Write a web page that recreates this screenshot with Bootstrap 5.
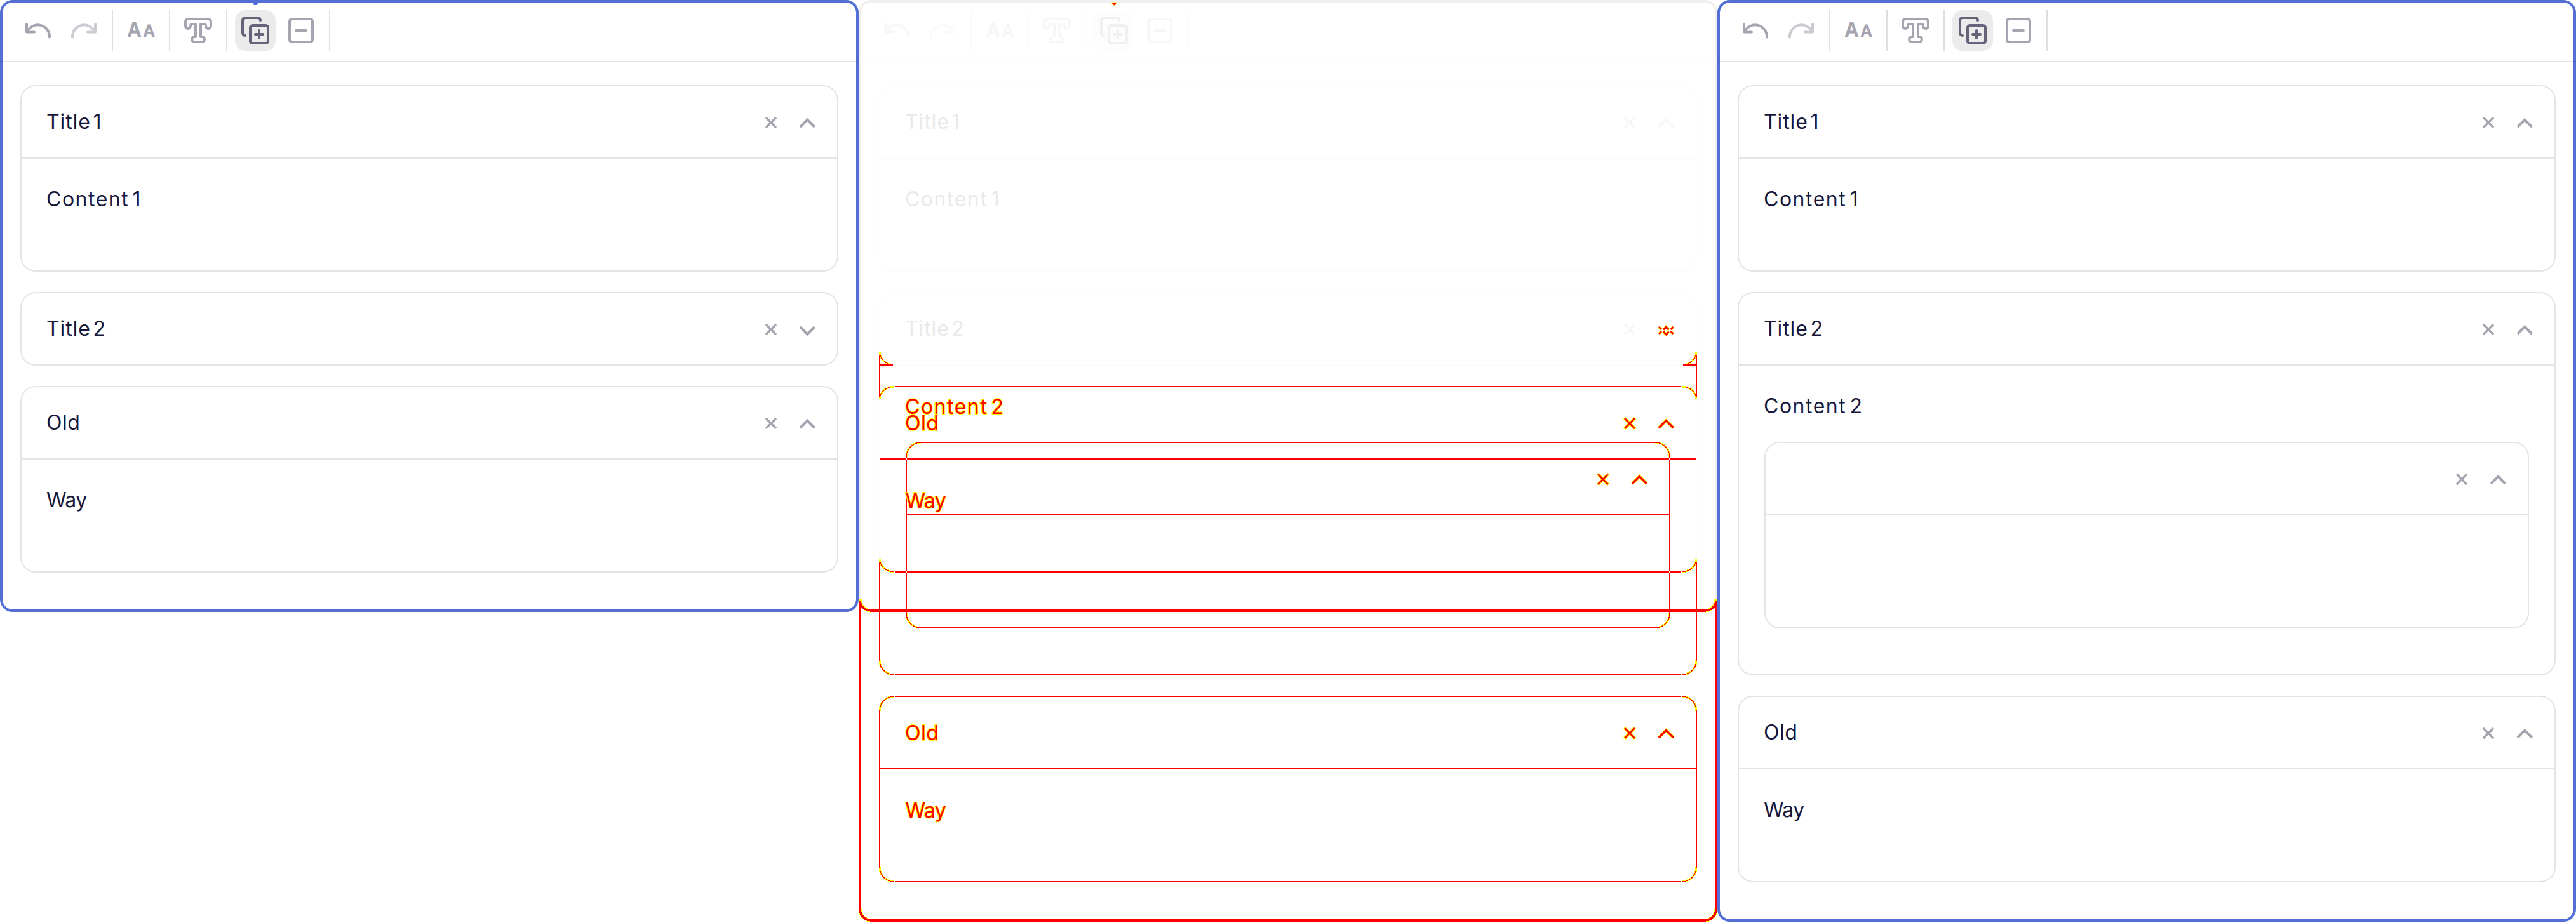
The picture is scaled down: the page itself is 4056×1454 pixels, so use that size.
<!DOCTYPE html>
<html lang="en">
<head>
<meta charset="utf-8">
<meta name="viewport" content="width=device-width, initial-scale=1">
<title>Editor visual diff</title>
<link href="https://cdn.jsdelivr.net/npm/bootstrap@5.3.0/dist/css/bootstrap.min.css" rel="stylesheet">
<style>
  body { margin: 0; background: #fff; font-family: Inter, "Open Sans", sans-serif; overflow: hidden; }
  .pane {
    --frame: #536ed4; --rule: #e4e4e4; --sep: #e0e0e0; --ink: #16173a;
    --icon: #a5a4b0; --icon-off: #cbcbd2; --icon-on: #64637a; --on-bg: #ebebeb;
    width: 1352px; height: 1452px; flex: none;
  }
  .pane.short { height: 964px; }
  .pane.faded {
    --frame: #f0f0f0; --rule: #fcfcfc; --sep: #fbfbfb; --ink: #e9e9e9;
    --icon: #f7f7f7; --icon-off: #fafafa; --icon-on: #f0f0f0; --on-bg: #fdfdfd;
  }
  .pane::before { content: ""; position: absolute; inset: 0; border: 4px solid var(--frame); border-radius: 20px; pointer-events: none; }
  .tools { height: 98px; padding: 16px 0 16px 28px; border-bottom: 2px solid rgba(0,0,0,.106); }
  .faded .tools { border-bottom-color: #fcfcfc; }
  .tool-group { height: 64px; gap: 8px; padding-right: 12px; border-right: 2px solid var(--sep); margin-right: 12px; box-sizing: content-box; }
  .tool { width: 64px; height: 64px; padding: 0; border: 0; border-radius: 16px; background: none; color: var(--icon); }
  .tool.off { color: var(--icon-off); }
  .tool.on { color: var(--icon-on); background: var(--on-bg); }
  .tool svg, .act svg { display: block; width: 100%; height: 100%; }
  .ln { fill: none; stroke: currentColor; stroke-width: 4; stroke-linecap: round; stroke-linejoin: round; }
  .aa { fill: currentColor; stroke: currentColor; stroke-width: 1; stroke-linejoin: round; font-family: Inter, sans-serif; font-weight: 500; }
  .blocks { padding: 36px 32px 0; gap: 32px; }
  .block { border: 2px solid var(--rule); border-radius: 24px; min-height: 294px; color: var(--ink); }
  .block.closed { min-height: 116px; height: 116px; }
  .block.tall { min-height: 604px; }
  .block-head { height: 114px; padding: 0 23px 2px 40px; gap: 9px; }
  .block:not(.closed) > .block-head { border-bottom: 2px solid var(--rule); padding-bottom: 0; }
  .block-text { font-size: 32px; line-height: 48px; text-indent: -1px; }
  .t-title { letter-spacing: .9px; word-spacing: -6.2px; }
  .t-body { letter-spacing: 1.5px; word-spacing: -5.2px; }
  .t-old { letter-spacing: .5px; }
  .t-way { letter-spacing: -.6px; }
  .block-body { padding: 40px 40px 72px; }
  .block-body .block { margin-top: 32px; }
  .act { width: 48px; height: 48px; padding: 0; border: 0; background: none; color: var(--icon); }
  .nub { position: absolute; left: 397px; top: 3px; width: 10px; height: 5px; background: var(--frame); clip-path: polygon(0 0,100% 0,100% 25%,70% 100%,30% 100%,0 25%); }
  .marks { position: absolute; left: 0; top: 0; width: 1352px; height: 1454px; }
  .m2 { fill: none; stroke: #f00; stroke-width: 2; shape-rendering: crispEdges; }
  .m4 { fill: none; stroke: #f00; stroke-width: 4; shape-rendering: crispEdges; }
  .glow { fill: none; stroke: #ff0; stroke-width: 3; shape-rendering: crispEdges; }
  .glow-w { fill: none; stroke: #ff0; stroke-width: 5.4; shape-rendering: crispEdges; }
  .core { fill: none; stroke: #f00; stroke-width: 1.2; shape-rendering: crispEdges; }
  .core-w { fill: none; stroke: #f00; stroke-width: 3.4; shape-rendering: crispEdges; }
  .mt { font: 400 32px Inter, "Open Sans", sans-serif; fill: #f00; stroke: #ff0; stroke-width: 2.2; paint-order: stroke; }
</style>
<script src="https://cdn.jsdelivr.net/npm/bootstrap@5.3.0/dist/js/bootstrap.bundle.min.js"></script>
</head>
<body>
<svg width="0" height="0" class="position-absolute">
  <symbol id="undo" viewBox="28 16 64 64"><path class="ln" d="M42 38V50.5H54M43 49.5A18.5 18.5 0 0 1 78 58.5"/></symbol>
  <symbol id="redo" viewBox="100 16 64 64"><path class="ln" d="M150 38V50.5H138M149 49.5A18.5 18.5 0 0 0 114 58.5"/></symbol>
  <symbol id="caps" viewBox="190 16 64 64"><text class="aa" x="200.5" y="57.5" font-size="31">A</text><text class="aa" x="225.5" y="57.5" font-size="26">A</text></symbol>
  <symbol id="heading" viewBox="280 16 64 64"><path class="ln" d="M296 30H328a4 4 0 0 1 4 4V41a4 4 0 0 1-8 0q0-3-3-3H316V58h2a4 4 0 0 1 0 8H306a4 4 0 0 1 0-8h2V38h-5q-3 0-3 3a4 4 0 0 1-8 0V34a4 4 0 0 1 4-4z"/></symbol>
  <symbol id="addcopy" viewBox="370 16 64 64"><path class="ln" d="M410 32a4 4 0 0 0-4-4H386a4 4 0 0 0-4 4V52a4 4 0 0 0 4 4M408 48V60M402 54H414"/><rect class="ln" x="394" y="40" width="28" height="28" rx="3.5"/></symbol>
  <symbol id="minus" viewBox="442 16 64 64"><rect class="ln" x="456" y="30" width="36" height="36" rx="3.5"/><path class="ln" d="M466 48H482"/></symbol>
  <symbol id="close" viewBox="0 0 48 48"><path fill="none" stroke="currentColor" stroke-width="3.6" d="M16 17L32 33M32 17L16 33"/></symbol>
  <symbol id="up" viewBox="0 0 48 48"><path fill="none" stroke="currentColor" stroke-width="4" d="M13 32L24.3 20.7L35.6 32"/></symbol>
  <symbol id="down" viewBox="0 0 48 48"><path fill="none" stroke="currentColor" stroke-width="4" d="M13 21L24.3 32.3L35.6 21"/></symbol>
  <g id="mx"><path fill="none" stroke="#ff0" stroke-width="5" d="M-8.5 -8.5L8.5 8.5M8.5 -8.5L-8.5 8.5"/><path fill="none" stroke="#f00" stroke-width="2.6" d="M-8 -8L8 8M8 -8L-8 8"/></g>
  <g id="mu"><path fill="none" stroke="#ff0" stroke-width="5" d="M-11.5 7L0 -4.5L11.5 7"/><path fill="none" stroke="#f00" stroke-width="3.2" d="M-11.5 7L0 -4.5L11.5 7"/></g>
</svg>

<template id="toolbar">
  <div class="tool-group d-flex"><button class="tool" aria-label="Undo"><svg><use href="#undo"/></svg></button><button class="tool off" aria-label="Redo"><svg><use href="#redo"/></svg></button></div>
  <div class="tool-group d-flex"><button class="tool" aria-label="Letter case"><svg><use href="#caps"/></svg></button></div>
  <div class="tool-group d-flex"><button class="tool" aria-label="Heading"><svg><use href="#heading"/></svg></button></div>
  <div class="tool-group d-flex"><button class="tool on" aria-label="Add block"><svg><use href="#addcopy"/></svg></button><button class="tool" aria-label="Remove block"><svg><use href="#minus"/></svg></button></div>
</template>

<main class="d-flex align-items-start">
  <section class="pane short position-relative">
    <i class="nub"></i>
    <div class="tools d-flex position-relative"></div>
    <div class="blocks d-flex flex-column">
      <article class="block">
        <header class="block-head d-flex align-items-center"><span class="block-text t-title me-auto">Title 1</span><button class="act"><svg><use href="#close"/></svg></button><button class="act"><svg><use href="#up"/></svg></button></header>
        <div class="block-body block-text t-body">Content 1</div>
      </article>
      <article class="block closed">
        <header class="block-head d-flex align-items-center"><span class="block-text t-title me-auto">Title 2</span><button class="act"><svg><use href="#close"/></svg></button><button class="act"><svg><use href="#down"/></svg></button></header>
      </article>
      <article class="block">
        <header class="block-head d-flex align-items-center"><span class="block-text t-old me-auto">Old</span><button class="act"><svg><use href="#close"/></svg></button><button class="act"><svg><use href="#up"/></svg></button></header>
        <div class="block-body block-text t-way">Way</div>
      </article>
    </div>
  </section>

  <section class="pane faded position-relative">
    <div class="tools d-flex position-relative"></div>
    <div class="blocks d-flex flex-column">
      <article class="block">
        <header class="block-head d-flex align-items-center"><span class="block-text t-title me-auto">Title 1</span><button class="act"><svg><use href="#close"/></svg></button><button class="act"><svg><use href="#up"/></svg></button></header>
        <div class="block-body block-text t-body">Content 1</div>
      </article>
      <article class="block tall">
        <header class="block-head d-flex align-items-center"><span class="block-text t-title me-auto">Title 2</span><button class="act"><svg><use href="#close"/></svg></button><span class="act"></span></header>
      </article>
    </div>
    <!-- changed pixels: red strokes with yellow antialiasing edges -->
    <svg class="marks" viewBox="0 0 1352 1454">
      <path d="M397.5 4H407L402.3 9z" fill="#f00" stroke="#ff0" stroke-width=".8"/>
      <g id="frame-side">
        <path class="glow-w" d="M2 944A18 18 0 0 0 20 962M2 1432A18 18 0 0 0 20 1450"/>
        <path class="core-w" d="M2 947A18 16 0 0 0 20 962M2 1432A18 18 0 0 0 20 1450"/>
        <path class="m4" d="M2 950V1434"/>
        <path class="glow" d="M33 554A23 21 0 0 0 54 575M33 629A23 20 0 0 1 56 609M33 880A23 21 0 0 0 56 901"/>
        <path class="core" d="M33 554A23 21 0 0 0 54 575M33 629A23 20 0 0 1 56 609M33 880A23 21 0 0 0 56 901"/>
        <path class="m2" d="M33 559V625M34 575H52M33 885V1040"/>
        <path class="glow" d="M33 1040A23 23 0 0 0 56 1063M33 1120A23 23 0 0 1 56 1097M33 1366A23 23 0 0 0 56 1389"/>
        <path class="core" d="M33 1040A23 23 0 0 0 56 1063M33 1120A23 23 0 0 1 56 1097M33 1366A23 23 0 0 0 56 1389"/>
        <path class="m2" d="M33 1120V1366"/>
        <path class="glow" d="M75 720A23 23 0 0 1 98 697M75 966A23 23 0 0 0 98 989"/>
        <path class="core" d="M75 720A23 23 0 0 1 98 697M75 966A23 23 0 0 0 98 989"/>
        <path class="m2" d="M75 720V966"/>
      </g>
      <use href="#frame-side" transform="matrix(-1 0 0 1 1352 0)"/>
      <path class="m4" d="M20 962H1332M20 1450H1332"/>
      <path class="m2" d="M57 609H1295M34 723H1318M57 901H1295M57 1063H1295M57 1097H1295M34 1211H1318M57 1389H1295M98 697H1254M75 811H1277M98 989H1254"/>
      <path fill="#fff" d="M74 722h2v2h-2zM1276 722h2v2h-2zM74 900h2v2h-2zM1276 900h2v2h-2z"/>
      <!-- overlapping chevrons of the second block -->
      <path fill="none" stroke="#ff0" stroke-width="4.5" d="M1260 515l4 4M1264 522l-4 4M1282.5 515l-4 4M1278.5 522l4 4M1267 519.5l4.3-4.5l4.3 4.5M1267 522.5l4.3 4.5l4.3-4.5"/>
      <path fill="none" stroke="#f00" stroke-width="2.8" d="M1260 515l4 4M1264 522l-4 4M1282.5 515l-4 4M1278.5 522l4 4M1267 519.5l4.3-4.5l4.3 4.5M1267 522.5l4.3 4.5l4.3-4.5"/>
      <use href="#mx" x="1214" y="667"/><use href="#mu" x="1271.3" y="667"/>
      <use href="#mx" x="1172" y="755"/><use href="#mu" x="1229.3" y="755"/>
      <use href="#mx" x="1214" y="1155"/><use href="#mu" x="1271.3" y="1155"/>
      <text class="mt t-body" x="73" y="651.5">Content 2</text>
      <text class="mt t-old" x="73" y="677.5">Old</text>
      <text class="mt t-way" x="73.5" y="799.5">Way</text>
      <text class="mt t-old" x="73" y="1165.5">Old</text>
      <text class="mt t-way" x="73.5" y="1287.5">Way</text>
    </svg>
  </section>

  <section class="pane position-relative">
    <div class="tools d-flex position-relative"></div>
    <div class="blocks d-flex flex-column">
      <article class="block">
        <header class="block-head d-flex align-items-center"><span class="block-text t-title me-auto">Title 1</span><button class="act"><svg><use href="#close"/></svg></button><button class="act"><svg><use href="#up"/></svg></button></header>
        <div class="block-body block-text t-body">Content 1</div>
      </article>
      <article class="block tall">
        <header class="block-head d-flex align-items-center"><span class="block-text t-title me-auto">Title 2</span><button class="act"><svg><use href="#close"/></svg></button><button class="act"><svg><use href="#up"/></svg></button></header>
        <div class="block-body block-text t-body">Content 2
          <div class="block">
            <header class="block-head d-flex align-items-center justify-content-end"><button class="act"><svg><use href="#close"/></svg></button><button class="act"><svg><use href="#up"/></svg></button></header>
          </div>
        </div>
      </article>
      <article class="block">
        <header class="block-head d-flex align-items-center"><span class="block-text t-old me-auto">Old</span><button class="act"><svg><use href="#close"/></svg></button><button class="act"><svg><use href="#up"/></svg></button></header>
        <div class="block-body block-text t-way">Way</div>
      </article>
    </div>
  </section>
</main>
<script>
  // every pane carries the same toolbar
  const tpl = document.getElementById('toolbar');
  document.querySelectorAll('.tools').forEach(t => t.append(tpl.content.cloneNode(true)));
</script>
</body>
</html>
